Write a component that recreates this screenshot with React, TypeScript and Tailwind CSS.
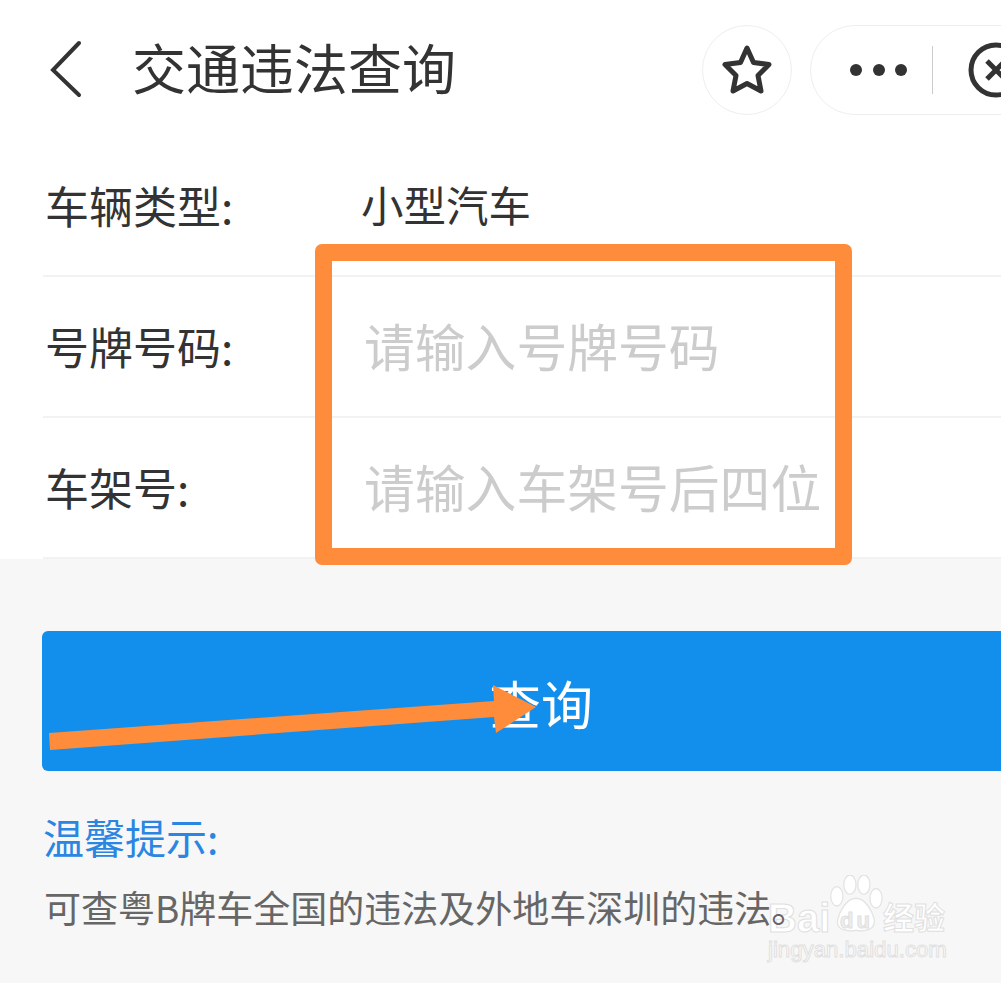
const rows = [
  { label: '车辆类型:', value: '小型汽车', isValue: true },
  { label: '号牌号码:', value: '请输入号牌号码', isValue: false },
  { label: '车架号:', value: '请输入车架号后四位', isValue: false },
];

function Header() {
  return (
    <div className="flex h-[136px] items-start bg-white pt-[25px] text-[#333]">
      <svg className="ml-[46px] mt-[14px] h-[62px] w-[40px] shrink-0" viewBox="0 0 40 62" fill="none">
        <path d="M33 4 L7 31 L33 56" stroke="#333" strokeWidth="4" strokeLinecap="round" strokeLinejoin="miter" />
      </svg>
      <h1 className="ml-[46px] mt-[10px] shrink-0 whitespace-nowrap text-[54px] font-normal leading-[64px]">交通违法查询</h1>
      <div className="ml-[246px] flex h-[90px] w-[90px] shrink-0 items-center justify-center rounded-full border border-[#eee]">
        <svg className="h-[52px] w-[52px]" viewBox="0 0 52 52" fill="none">
          <path
            d="M26 4 L32.5 18.5 L48 20.5 L37 31.5 L40 47 L26 39.5 L12 47 L15 31.5 L4 20.5 L19.5 18.5 Z"
            stroke="#333"
            strokeWidth="5"
            strokeLinejoin="round"
          />
        </svg>
      </div>
      <div className="ml-[18px] flex h-[90px] w-[300px] shrink-0 items-center rounded-l-[45px] border border-[#eee] pl-[39px]">
        <div className="flex gap-[10.5px]">
          <span className="h-[12px] w-[12px] rounded-full bg-[#333]" />
          <span className="h-[12px] w-[12px] rounded-full bg-[#333]" />
          <span className="h-[12px] w-[12px] rounded-full bg-[#333]" />
        </div>
        <div className="ml-[25px] h-[48px] w-px bg-[#ccc]" />
        <svg className="ml-[35px] h-[56px] w-[56px] shrink-0" viewBox="0 0 56 56" fill="none">
          <circle cx="28" cy="28" r="25" stroke="#333" strokeWidth="5" />
          <path d="M19 19 L37 37 M37 19 L19 37" stroke="#333" strokeWidth="5" />
        </svg>
      </div>
    </div>
  );
}

function Row({ label, value, isValue }: (typeof rows)[number]) {
  return (
    <div className="ml-[43px] flex h-[141px] items-center border-b-2 border-[#f2f2f2]">
      <span className="mb-[2px] w-[318px] shrink-0 pl-[2px] text-[44px] leading-none text-[#333]">{label}</span>
      {isValue ? (
        <span className="mb-[2px] text-[42.5px] leading-none text-[#333]">{value}</span>
      ) : (
        <span className="mb-[2px] pl-[3px] text-[50.8px] leading-none text-[#ccc]">{value}</span>
      )}
    </div>
  );
}

function Watermark() {
  return (
    <div className="absolute left-[768px] top-[874px] h-[90px] w-[190px] text-white [-webkit-text-stroke:1px_#e0e0e0]">
      <svg
        className="absolute left-[61px] top-[1px] h-[60px] w-[54px]"
        viewBox="0 0 62 62"
        preserveAspectRatio="none"
        fill="#fff"
        stroke="#e4e4e4"
        strokeWidth="1.5"
      >
        <ellipse cx="9" cy="22" rx="7" ry="10" />
        <ellipse cx="24" cy="10" rx="7" ry="10" />
        <ellipse cx="40" cy="10" rx="7" ry="10" />
        <ellipse cx="54" cy="24" rx="7" ry="10" />
        <path d="M31 24 C42 24 50 38 52 46 C53 56 44 59 31 57 C18 59 8 56 10 46 C12 38 20 24 31 24 Z" />
      </svg>
      <span className="absolute left-0 top-[24px] font-['Liberation_Sans'] text-[40px] font-bold leading-none">Bai</span>
      <span className="absolute left-[72px] top-[36px] font-['Liberation_Sans'] text-[22px] font-bold leading-none tracking-[3px] text-[#eee]">du</span>
      <span className="absolute left-[115px] top-[26px] text-[31px] font-bold leading-none">经验</span>
      <span className="absolute left-0 top-[65px] whitespace-nowrap font-['Liberation_Sans'] text-[22.2px] leading-none">jingyan.baidu.com</span>
    </div>
  );
}

export default function App() {
  return (
    <div className="relative h-[983px] w-[1001px] overflow-hidden bg-[#f7f7f7] font-['Noto_Sans_CJK_SC','Noto_Sans',sans-serif]">
      <Header />

      {/* Form */}
      <div className="bg-white">
        {rows.map((row) => (
          <Row key={row.label} {...row} />
        ))}
      </div>

      {/* Submit */}
      <div className="ml-[42px] mt-[72px] flex h-[140px] w-[1000px] items-center rounded-[6px] bg-[#128fec] pl-[447px] pt-[4px]">
        <span className="text-[52px] leading-none text-white">查询</span>
      </div>

      {/* Tips */}
      <div className="ml-[43px] mt-[43px] text-[41px] leading-[44px] text-[#2b86e2]">温馨提示:</div>
      <div className="relative z-10 ml-[44px] mt-[27px] whitespace-nowrap text-[37px] leading-[44px] text-[#666]">
        可查粤B牌车全国的违法及外地车深圳的违法。
      </div>

      <Watermark />

      {/* Annotation overlay */}
      <div className="absolute left-[315px] top-[244px] h-[321px] w-[537px] rounded-[7px] border-[17px] border-[#ff8c3a]" />
      <svg className="absolute left-0 top-0 h-[983px] w-[1001px]" viewBox="0 0 1001 983">
        <path d="M49 733 L494 701 L493 685 L536 707 L496 733 L494 717 L50 750 Z" fill="#ff8c3a" />
      </svg>
    </div>
  );
}
